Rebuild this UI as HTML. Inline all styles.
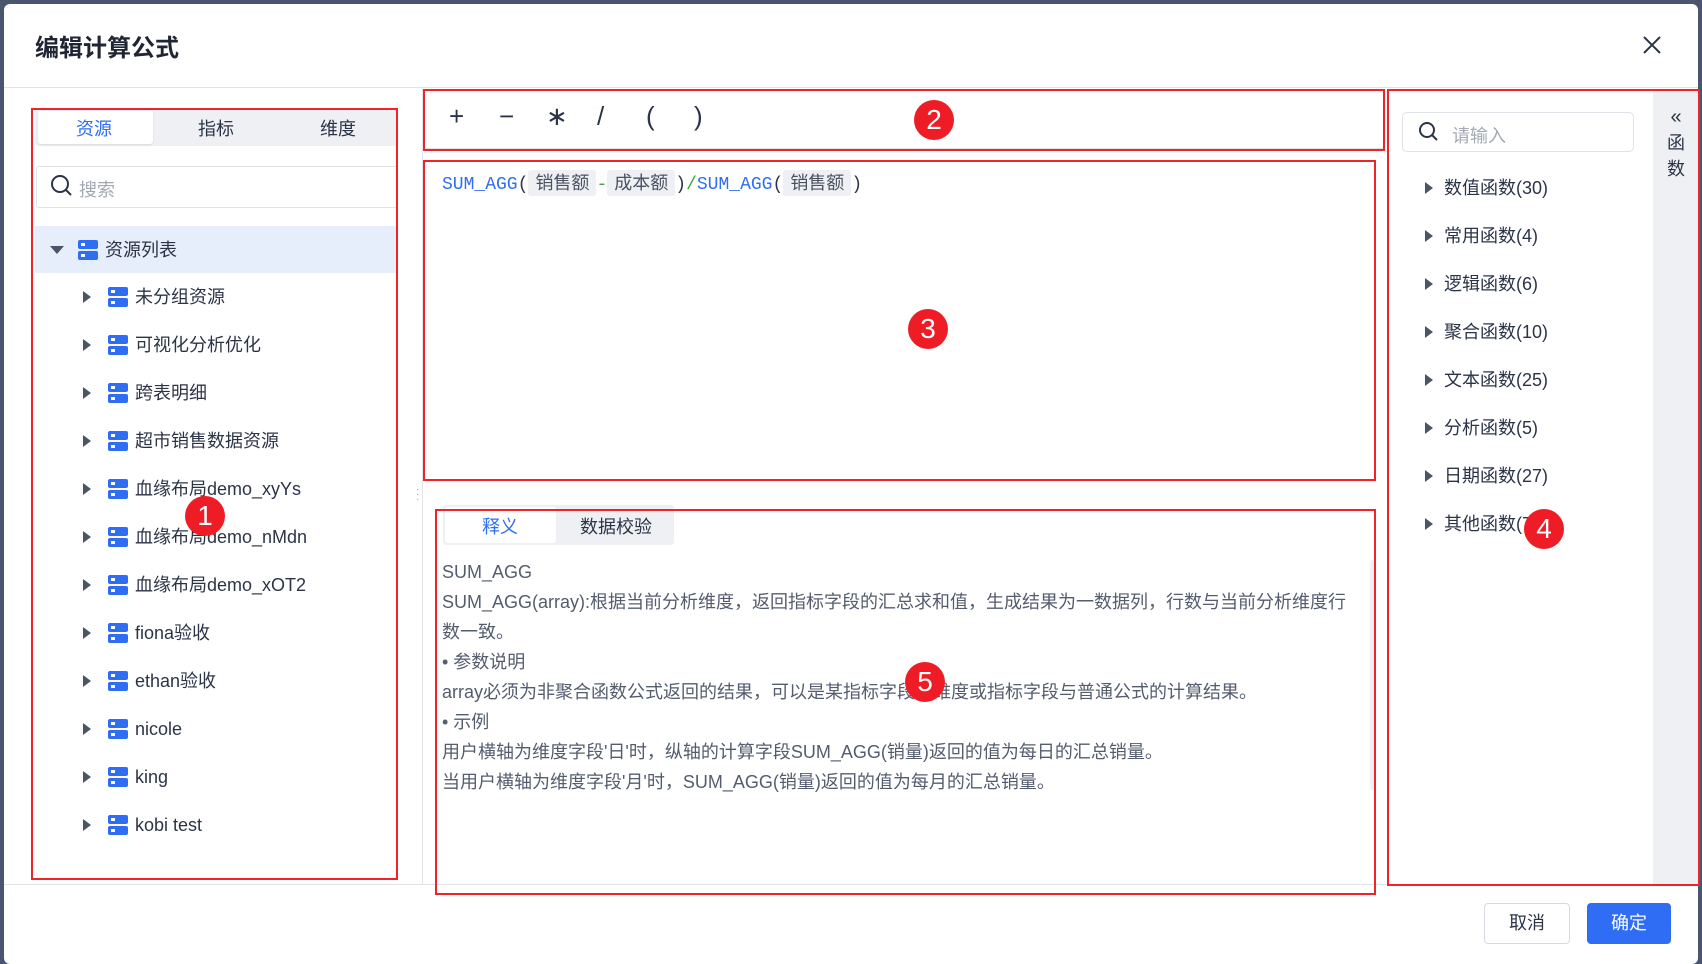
<!DOCTYPE html>
<html><head><meta charset="utf-8"><style>
*{box-sizing:border-box;margin:0;padding:0}
body{width:1702px;height:960px;background:#4a5670;font-family:"Liberation Sans","Noto Sans CJK SC",sans-serif;color:#2b3447;position:relative;overflow:hidden}
.a{position:absolute}
.modal{left:4px;top:4px;width:1694px;height:960px;background:#fff;border-radius:6px}
.red{position:absolute;border:2px solid #f0222a}
.num{position:absolute;width:40px;height:40px;border-radius:50%;background:#ee1c25;color:#fff;font-size:28px;text-align:center;line-height:40px}
.tri{position:absolute;width:0;height:0;border-top:6px solid transparent;border-bottom:6px solid transparent;border-left:8px solid #4b5567}
.row{position:absolute;left:86px;height:48px;line-height:48px;font-size:18px;color:#2b3447}
.ic{display:inline-block;vertical-align:middle;width:20px;height:20px;margin:0 7px 3px 20px;position:relative}
.ic:before,.ic:after{content:"";position:absolute;left:0;width:20px;height:9px;background:#2f6df5;border-radius:2px}
.ic:before{top:0}.ic:after{top:11px}
.ic i{position:absolute;left:3px;width:4px;height:3px;background:#fff;z-index:2}
.fn{position:absolute;left:1425px;font-size:18px;height:30px;line-height:30px}
.fn .tri{left:0;top:9px}
.fn span{margin-left:19px}
.tag{background:#eef0f3;color:#4a5262;padding:3px 7px;border-radius:3px;font-family:"Liberation Sans","Noto Sans CJK SC",sans-serif}
.desc{position:absolute;left:442px;font-size:18px;color:#545d6e;line-height:30px;white-space:nowrap}
</style></head><body>
<div class="a modal"></div>
<div class="a" style="left:35px;top:28px;font-size:24px;font-weight:bold;color:#1f2533">编辑计算公式</div>
<svg class="a" style="left:1642px;top:35px" width="20" height="20"><path d="M2 2L18 18M18 2L2 18" stroke="#2b3447" stroke-width="2"/></svg>
<div class="a" style="left:4px;top:87px;width:1694px;height:1px;background:#dfe2e7"></div>
<div class="a" style="left:422px;top:88px;width:1px;height:796px;background:#e3e5ea"></div>
<div class="a" style="left:4px;top:884px;width:1694px;height:1px;background:#dfe2e7"></div>

<div class="a" style="left:35px;top:109px;width:362px;height:37px;background:#eef0f3;border-radius:3px"></div>
<div class="a" style="left:38px;top:111px;width:115px;height:33px;background:#fff;border-radius:3px;box-shadow:0 1px 2px rgba(0,0,0,.1)"></div>
<div class="a" style="left:76px;top:115px;font-size:18px;color:#2f6df5">资源</div>
<div class="a" style="left:198px;top:115px;font-size:18px">指标</div>
<div class="a" style="left:320px;top:115px;font-size:18px">维度</div>
<div class="a" style="left:36px;top:166px;width:362px;height:42px;border:1px solid #dfe2e7;border-radius:3px"></div>
<svg class="a" style="left:50px;top:174px" width="24" height="24"><circle cx="10" cy="10" r="8" fill="none" stroke="#2b3447" stroke-width="2"/><path d="M16 16L21 21" stroke="#2b3447" stroke-width="2"/></svg>
<div class="a" style="left:79px;top:176px;font-size:18px;color:#a3a9b3">搜索</div>
<div class="a" style="left:35px;top:226px;width:362px;height:47px;background:#e6eefc"></div>
<div class="a" style="left:50px;top:246px;border-left:7px solid transparent;border-right:7px solid transparent;border-top:8px solid #4b5567"></div>
<div class="row" style="left:58px;top:226px"><span class="ic"><i style="top:3px"></i><i style="top:14px"></i></span>资源列表</div>
<div id="tree"></div>

<div class="red" style="left:31px;top:108px;width:367px;height:772px"></div>
<div class="num" style="left:185px;top:496px">1</div>

<div class="a" style="left:423px;top:148px;width:961px;height:1px;background:#dfe2e7"></div>
<div class="a" style="left:449px;top:101px;font-size:26px;color:#2b3447">
<span class="a" style="left:0">+</span><span class="a" style="left:50px">−</span><span class="a" style="left:97px">∗</span><span class="a" style="left:148px">/</span><span class="a" style="left:197px">(</span><span class="a" style="left:245px">)</span></div>
<div class="red" style="left:423px;top:89px;width:962px;height:62px"></div>
<div class="num" style="left:914px;top:100px">2</div>

<div class="a" style="left:442px;top:169px;font-size:18px;font-family:'Liberation Mono','Noto Sans CJK SC',monospace;color:#2f6df5;white-space:nowrap">SUM_AGG<span style="color:#2b3447">(</span><span class="tag">销售额</span><span style="color:#3aaa35">-</span><span class="tag">成本额</span><span style="color:#2b3447">)</span><span style="color:#3aaa35">/</span>SUM_AGG<span style="color:#2b3447">(</span><span class="tag">销售额</span><span style="color:#2b3447">)</span></div>
<div class="red" style="left:423px;top:160px;width:953px;height:321px"></div>
<div class="num" style="left:908px;top:309px">3</div>
<div class="a" style="left:416px;top:487px;color:#9aa1ab;font-size:10px;line-height:5px">·<br>·<br>·</div>

<div class="a" style="left:443px;top:505px;width:231px;height:40px;background:#eef0f3;border-radius:3px"></div>
<div class="a" style="left:445px;top:507px;width:111px;height:36px;background:#fff;border-radius:3px"></div>
<div class="a" style="left:482px;top:513px;font-size:18px;color:#2f6df5">释义</div>
<div class="a" style="left:580px;top:513px;font-size:18px">数据校验</div>
<div class="desc" style="top:557px">SUM_AGG<br>SUM_AGG(array):根据当前分析维度，返回指标字段的汇总求和值，生成结果为一数据列，行数与当前分析维度行<br>数一致。<br>• 参数说明<br>array必须为非聚合函数公式返回的结果，可以是某指标字段、维度或指标字段与普通公式的计算结果。<br>• 示例<br>用户横轴为维度字段'日'时，纵轴的计算字段SUM_AGG(销量)返回的值为每日的汇总销量。<br>当用户横轴为维度字段'月'时，SUM_AGG(销量)返回的值为每月的汇总销量。</div>
<div class="a" style="left:1370px;top:560px;width:4px;height:230px;background:#eef0f3;border-radius:2px"></div>
<div class="a" style="left:435px;top:884px;width:940px;height:1px;background:#dfe2e7"></div>
<div class="red" style="left:435px;top:509px;width:941px;height:386px"></div>
<div class="num" style="left:905px;top:662px">5</div>

<div class="a" style="left:1653px;top:89px;width:46px;height:796px;background:#eef0f3"></div>
<div class="a" style="left:1667px;top:104px;font-size:20px;line-height:26px;text-align:center;color:#2b3447">«<br><span style="font-size:18px">函<br>数</span></div>
<div class="a" style="left:1402px;top:112px;width:232px;height:40px;border:1px solid #dfe2e7;border-radius:5px"></div>
<svg class="a" style="left:1418px;top:121px" width="22" height="22"><circle cx="9" cy="9" r="7" fill="none" stroke="#2b3447" stroke-width="2"/><path d="M14 14L19 19" stroke="#2b3447" stroke-width="2"/></svg>
<div class="a" style="left:1452px;top:122px;font-size:18px;color:#a3a9b3">请输入</div>
<div class="fn" style="top:173px"><div class="tri"></div><span>数值函数(30)</span></div>
<div class="fn" style="top:221px"><div class="tri"></div><span>常用函数(4)</span></div>
<div class="fn" style="top:269px"><div class="tri"></div><span>逻辑函数(6)</span></div>
<div class="fn" style="top:317px"><div class="tri"></div><span>聚合函数(10)</span></div>
<div class="fn" style="top:365px"><div class="tri"></div><span>文本函数(25)</span></div>
<div class="fn" style="top:413px"><div class="tri"></div><span>分析函数(5)</span></div>
<div class="fn" style="top:461px"><div class="tri"></div><span>日期函数(27)</span></div>
<div class="fn" style="top:509px"><div class="tri"></div><span>其他函数(7)</span></div>
<div class="red" style="left:1387px;top:89px;width:313px;height:797px"></div>
<div class="num" style="left:1524px;top:509px">4</div>

<div class="a" style="left:1484px;top:903px;width:86px;height:41px;border:1px solid #d6dae0;border-radius:4px;text-align:center;line-height:39px;font-size:18px">取消</div>
<div class="a" style="left:1587px;top:903px;width:84px;height:41px;background:#2f6df5;border-radius:4px;text-align:center;line-height:41px;font-size:18px;color:#fff">确定</div>

<script>
var items=["未分组资源","可视化分析优化","跨表明细","超市销售数据资源","血缘布局demo_xyYs","血缘布局demo_nMdn","血缘布局demo_xOT2","fiona验收","ethan验收","nicole","king","kobi test"];
var h="";
items.forEach(function(t,i){var y=273+i*48;
h+='<div class="tri" style="left:83px;top:'+(y+18)+'px"></div><div class="row" style="left:88px;top:'+y+'px"><span class="ic"><i style="top:3px"></i><i style="top:14px"></i></span>'+t+'</div>';});
document.getElementById("tree").innerHTML=h;
</script>
</body></html>
